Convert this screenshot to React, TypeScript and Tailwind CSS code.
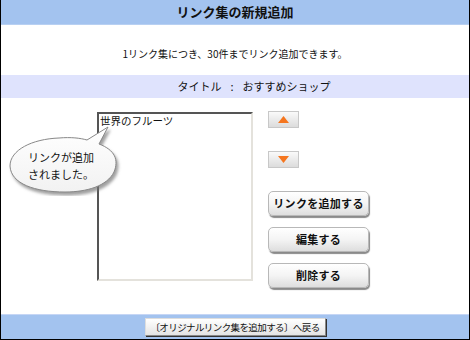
import React from "react";

const font = { fontFamily: '"Noto Sans CJK JP", "Noto Sans", sans-serif' };

function SmallBtn({ up }: { up: boolean }) {
  return (
    <div className="w-[31px] h-[17px] border border-[#c8c8c8] bg-gradient-to-b from-[#fafafa] to-[#dcdcdc] flex items-center justify-center">
      <svg width="11" height="7" viewBox="0 0 11 7">
        {up ? <polygon points="5.5,0 11,7 0,7" fill="#f5761f" /> : <polygon points="0,0 11,0 5.5,7" fill="#f5761f" />}
      </svg>
    </div>
  );
}

function BigBtn({ label }: { label: string }) {
  return (
    <div className="w-[101px] h-[25px] rounded-[5px] border border-[#b8b8b8] bg-gradient-to-b from-[#ffffff] via-[#f4f4f4] to-[#dedede] shadow-[1px_2px_1px_#8a8a8a] flex items-center justify-center text-[11px] text-[#111] font-semibold tracking-[0.3px] whitespace-nowrap">
      {label}
    </div>
  );
}

export default function App() {
  return (
    <div className="w-[470px] h-[340px] bg-white border-x border-b border-black flex flex-col relative" style={font}>
      <div className="h-[25px] bg-[#a3c3ef] border-b border-[#b8d0f2] flex items-center justify-center text-[13px] font-bold text-[#111]">
        リンク集の新規追加
      </div>
      <div className="h-[50px] pt-[6px] flex items-center justify-center text-[10px] text-[#111]">
        1リンク集につき、30件までリンク追加できます。
      </div>
      <div className="h-[23px] bg-[#dfe3fd] flex items-center justify-center text-[11px] text-[#111] pl-[38px]">
        <span>タイトル</span>
        <span className="ml-[9px]">:</span>
        <span className="ml-[9px]">おすすめショップ</span>
      </div>
      <div className="flex-1 flex pt-[14px] pl-[96px]">
        <div className="w-[156px] h-[169px] border-t-2 border-l-2 border-t-[#555] border-l-[#555] border-r-2 border-b-2 border-r-[#e4e2dc] border-b-[#e4e2dc] bg-white text-[10.5px] leading-[13px] text-[#111] pl-[1px]">
          世界のフルーツ
        </div>
        <div className="flex flex-col ml-[15px] -mt-[1px]">
          <SmallBtn up />
          <div className="h-[23px]" />
          <SmallBtn up={false} />
          <div className="h-[23px]" />
          <div className="flex flex-col gap-[11px]">
            <BigBtn label="リンクを追加する" />
            <BigBtn label="編集する" />
            <BigBtn label="削除する" />
          </div>
        </div>
      </div>
      <div className="h-[25px] bg-[#a3c3ef] border-t border-[#c6d6f5] flex items-center justify-center">
        <div className="w-[181px] h-[18px] border border-[#888] border-t-[#ddd] border-l-[#ddd] bg-gradient-to-b from-[#ffffff] to-[#e4e4e4] shadow-[1px_1px_0_#333] flex items-center justify-center text-[9.5px] tracking-[-0.6px] text-[#111] whitespace-nowrap">
          〔オリジナルリンク集を追加する〕へ戻る
        </div>
      </div>
      <div className="absolute left-[6px] top-[124px] w-[120px] h-[72px]">
        <svg width="120" height="72" viewBox="0 0 120 72" className="absolute inset-0">
          <defs>
            <filter id="sh" x="-20%" y="-20%" width="140%" height="140%">
              <feDropShadow dx="2" dy="3" stdDeviation="1.5" floodColor="#777" floodOpacity="0.7" />
            </filter>
            <linearGradient id="g" x1="0" y1="0" x2="0" y2="1">
              <stop offset="0" stopColor="#ffffff" />
              <stop offset="1" stopColor="#f2f2f2" />
            </linearGradient>
          </defs>
          <path
            d="M 80 16 L 101 3 L 92 20 C 108 26 112 36 107 48 C 100 62 80 68 58 68 C 28 68 4 60 3 42 C 3 26 25 15 52 14 C 64 13 73 14 80 16 Z"
            fill="url(#g)"
            stroke="#888"
            strokeWidth="1"
            filter="url(#sh)"
          />
        </svg>
        <div className="absolute left-[21px] top-[25px] text-[11px] leading-[17px] text-[#111]">
          リンクが追加
          <br />
          されました。
        </div>
      </div>
    </div>
  );
}
